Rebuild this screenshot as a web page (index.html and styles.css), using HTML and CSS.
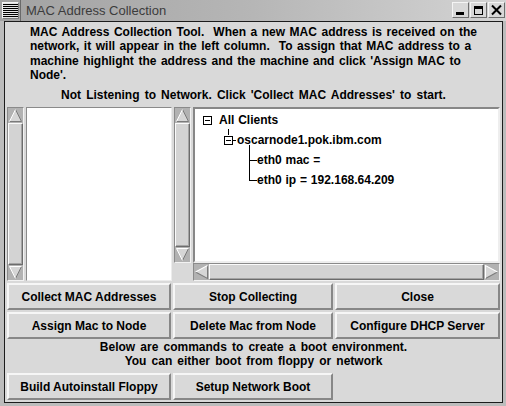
FILE: index.html
```html
<!DOCTYPE html>
<html>
<head>
<meta charset="utf-8">
<link rel="stylesheet" href="styles.css">
</head>
<body>
<div class="window">
  <div class="titlebar">
    <div class="menu-btn">
      <svg width="15" height="15" viewBox="0 0 15 15"><g stroke="#000" stroke-width="1"><line x1="0" y1="1.5" x2="15" y2="1.5"/><line x1="0" y1="3.5" x2="15" y2="3.5"/><line x1="0" y1="5.5" x2="15" y2="5.5"/><line x1="0" y1="7.5" x2="15" y2="7.5"/><line x1="0" y1="9.5" x2="15" y2="9.5"/><line x1="0" y1="11.5" x2="15" y2="11.5"/><line x1="0" y1="13.5" x2="15" y2="13.5"/></g></svg>
    </div>
    <div class="title">MAC Address Collection</div>
    <div class="wm-btns">
      <div class="wm-btn"><svg width="15" height="14" viewBox="0 0 15 14"><rect x="3" y="9" width="8" height="3" fill="#000"/></svg></div>
      <div class="wm-btn"><svg width="15" height="14" viewBox="0 0 15 14"><rect x="3.5" y="3.5" width="8" height="8" fill="none" stroke="#000"/><rect x="3" y="3" width="9" height="3" fill="#000"/></svg></div>
      <div class="wm-btn"><svg width="15" height="14" viewBox="0 0 15 14"><path d="M3 2.5 L12 11.5 M12 2.5 L3 11.5" stroke="#000" stroke-width="2"/></svg></div>
    </div>
  </div>
  <div class="client">
    <div class="desc">MAC Address Collection Tool.  When a new MAC address is received on the
network, it will appear in the left column.  To assign that MAC address to a
machine highlight the address and the machine and click 'Assign MAC to
Node'.</div>
    <div class="status">Not Listening to Network. Click 'Collect MAC Addresses' to start.</div>
    <div class="panels">
      <div class="vscroll">
        <svg class="arrow" width="15" height="15" viewBox="0 0 15 15"><polygon points="7.5,1.5 13.5,13.5 1.5,13.5" fill="#d6d6d6"/><polyline points="7.5,1.5 13.5,13.5 1.5,13.5" fill="none" stroke="#7a7a7a"/><polyline points="1.5,13.5 7.5,1.5" fill="none" stroke="#fff"/></svg>
        <div class="thumb"></div>
        <svg class="arrow" width="15" height="15" viewBox="0 0 15 15"><polygon points="1.5,1.5 13.5,1.5 7.5,13.5" fill="#d6d6d6"/><polyline points="13.5,1.5 7.5,13.5" fill="none" stroke="#7a7a7a"/><polyline points="7.5,13.5 1.5,1.5 13.5,1.5" fill="none" stroke="#fff"/></svg>
      </div>
      <div class="listbox"></div>
      <div class="treecol">
        <div class="treerow">
          <div class="vscroll">
            <svg class="arrow" width="15" height="15" viewBox="0 0 15 15"><polygon points="7.5,1.5 13.5,13.5 1.5,13.5" fill="#d6d6d6"/><polyline points="7.5,1.5 13.5,13.5 1.5,13.5" fill="none" stroke="#7a7a7a"/><polyline points="1.5,13.5 7.5,1.5" fill="none" stroke="#fff"/></svg>
            <div class="thumb"></div>
            <svg class="arrow" width="15" height="15" viewBox="0 0 15 15"><polygon points="1.5,1.5 13.5,1.5 7.5,13.5" fill="#d6d6d6"/><polyline points="13.5,1.5 7.5,13.5" fill="none" stroke="#7a7a7a"/><polyline points="7.5,13.5 1.5,1.5 13.5,1.5" fill="none" stroke="#fff"/></svg>
          </div>
          <div class="tree">
            <div class="node lvl0"><span class="box"></span><span>All Clients</span></div>
            <div class="node lvl1"><span class="box tick"></span><span class="dash"></span><span>oscarnode1.pok.ibm.com</span></div>
            <div class="node lvl2 first"><span class="branch"></span><span>eth0 mac =</span></div>
            <div class="node lvl2 last"><span class="branch"></span><span>eth0 ip = 192.168.64.209</span></div>
          </div>
        </div>
        <div class="hrow">
          <div class="corner"></div>
          <div class="hscroll">
            <svg class="harrow" width="15" height="16" viewBox="0 0 15 15" preserveAspectRatio="none"><polygon points="1.5,7.5 13.5,1.5 13.5,13.5" fill="#d6d6d6"/><polyline points="13.5,1.5 13.5,13.5 1.5,7.5" fill="none" stroke="#7a7a7a"/><polyline points="1.5,7.5 13.5,1.5" fill="none" stroke="#fff"/></svg>
            <div class="thumb"></div>
            <svg class="harrow" width="15" height="16" viewBox="0 0 15 15" preserveAspectRatio="none"><polygon points="13.5,7.5 1.5,1.5 1.5,13.5" fill="#d6d6d6"/><polyline points="13.5,7.5 1.5,13.5" fill="none" stroke="#7a7a7a"/><polyline points="1.5,13.5 1.5,1.5 13.5,7.5" fill="none" stroke="#fff"/></svg>
          </div>
        </div>
      </div>
    </div>
    <div class="btn-grid">
      <div class="btn">Collect MAC Addresses</div>
      <div class="btn">Stop Collecting</div>
      <div class="btn">Close</div>
      <div class="btn">Assign Mac to Node</div>
      <div class="btn">Delete Mac from Node</div>
      <div class="btn">Configure DHCP Server</div>
    </div>
    <div class="note">Below are commands to create a boot environment.<br>You can either boot from floppy or network</div>
    <div class="btn-grid last-row">
      <div class="btn">Build Autoinstall Floppy</div>
      <div class="btn">Setup Network Boot</div>
    </div>
  </div>
</div>
</body>
</html>
```
FILE: styles.css
```css
html, body {
  margin: 0;
  padding: 0;
  background: #bdbdbd;
}

body {
  font-family: "Liberation Sans", Arial, sans-serif;
  font-size: 12px;
  font-weight: bold;
  color: #000;
}

.window {
  width: 506px;
  height: 406px;
  box-sizing: border-box;
  padding: 0 3px 3px 4px;
  display: flex;
  flex-direction: column;
  background: #bcbcbc;
}

.titlebar {
  height: 21px;
  flex: none;
  margin: 0 -3px 0 -4px;
  display: flex;
  align-items: stretch;
  background: linear-gradient(90deg, #a2a2a2 0%, #b6b6b6 50%, #d4d4d4 100%);
}

.menu-btn {
  width: 17px;
  height: 17px;
  margin: 2px 0 0 2px;
  box-sizing: border-box;
  background: #e4e4e4;
  border: 1px solid;
  border-color: #f4f4f4 #7c7c7c #7c7c7c #f4f4f4;
  display: flex;
  align-items: center;
  justify-content: center;
}

.menu-btn svg { display: block; }

.title {
  flex: 1;
  margin-left: 1px;
  border-left: 1px solid #6a6a6a;
  padding-left: 5px;
  font-size: 13px;
  font-weight: normal;
  color: #3c3c3c;
  line-height: 21px;
}

.wm-btns {
  display: flex;
  gap: 1px;
  padding: 2px 1px 0 0;
}

.wm-btn {
  width: 17px;
  height: 16px;
  box-sizing: border-box;
  background: #d8d8d8;
  border: 1px solid;
  border-color: #f4f4f4 #6e6e6e #6e6e6e #f4f4f4;
  display: flex;
  align-items: center;
  justify-content: center;
}

.wm-btn svg { display: block; }

.client {
  flex: 1;
  background: #d9d9d9;
  border: 1px solid #1c1c1c;
  display: flex;
  flex-direction: column;
}

.desc {
  margin: 3px auto 0;
  white-space: pre;
  line-height: 14.25px;
  height: 57px;
  word-spacing: 1.2px;
}

.status {
  margin-top: 6px;
  line-height: 14px;
  text-align: center;
  word-spacing: 1.8px;
}

.panels {
  margin: 5px 0 0 2px;
  height: 174px;
  display: flex;
  gap: 2px;
}

.vscroll {
  width: 17px;
  flex: none;
  box-sizing: border-box;
  border: 1px solid;
  border-color: #8a8a8a #f2f2f2 #f2f2f2 #8a8a8a;
  background: #b2b2b2;
  display: flex;
  flex-direction: column;
}

.arrow { display: block; flex: none; }

.thumb {
  flex: 1;
  background: #d3d3d3;
  border: 1px solid;
  border-color: #fafafa #6c6c6c #6c6c6c #fafafa;
  box-shadow: inset -1px -1px 0 #a4a4a4;
}

.listbox {
  width: 146px;
  flex: none;
  box-sizing: border-box;
  background: #fff;
  border: 1px solid;
  border-color: #8a8a8a #ececec #ececec #8a8a8a;
}

.treecol {
  width: 326px;
  display: flex;
  flex-direction: column;
}

.treerow {
  flex: 1;
  display: flex;
  gap: 2px;
}

.tree {
  width: 307px;
  box-sizing: border-box;
  background: #fff;
  border: 2px solid;
  border-color: #878787 #eeeeee #eeeeee #878787;
  padding-top: 1px;
}

.node {
  position: relative;
  height: 20px;
  display: flex;
  align-items: center;
  word-spacing: 0.5px;
}

.lvl0 { padding-left: 8px; }
.lvl1 { padding-left: 29px; }
.lvl2 { padding-left: 54px; }

.box {
  position: relative;
  width: 9px;
  height: 9px;
  box-sizing: border-box;
  border: 1px solid #000;
  margin-right: 7px;
}

.box::after {
  content: "";
  position: absolute;
  left: 1px;
  top: 3px;
  width: 5px;
  height: 1px;
  background: #000;
}

.lvl1 .box { margin-right: 0; }

.tick::before {
  content: "";
  position: absolute;
  left: 3px;
  top: -8px;
  width: 1px;
  height: 6px;
  background: #000;
}

.dash {
  width: 3px;
  height: 1px;
  background: #000;
  margin-right: 1px;
}

.branch {
  width: 8px;
  height: 1px;
  background: #000;
}

.lvl2::before {
  content: "";
  position: absolute;
  left: 54px;
  width: 1px;
  background: #000;
}

.lvl2.first::before { top: -5px; bottom: 0; }
.lvl2.last::before { top: 0; height: 10px; }

.hrow {
  height: 18px;
  flex: none;
  display: flex;
  gap: 2px;
}

.corner { width: 17px; }

.hscroll {
  width: 307px;
  box-sizing: border-box;
  border: 1px solid;
  border-color: #8a8a8a #f2f2f2 #f2f2f2 #8a8a8a;
  background: #b2b2b2;
  display: flex;
}

.harrow { display: block; flex: none; }

.btn-grid {
  margin: 2px 0 0 2px;
  display: grid;
  grid-template-columns: 164px 160px 165px;
  grid-auto-rows: 27px;
  gap: 2px;
}

.btn-grid.last-row { margin-top: 5px; }

.btn {
  box-sizing: border-box;
  background: #d9d9d9;
  border: 2px solid;
  border-color: #f6f6f6 #878787 #878787 #f6f6f6;
  display: flex;
  align-items: center;
  justify-content: center;
  white-space: nowrap;
}

.note {
  padding-top: 2px;
  line-height: 13.5px;
  text-align: center;
  word-spacing: 1.8px;
}
```
